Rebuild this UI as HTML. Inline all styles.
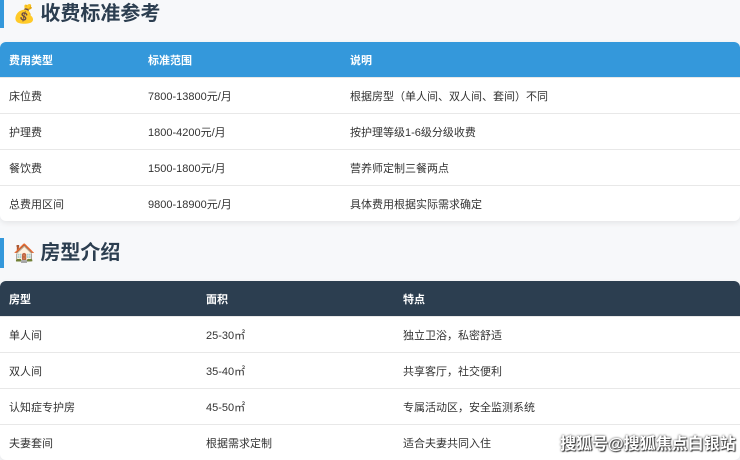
<!DOCTYPE html>
<html><head><meta charset="utf-8"><style>
body{margin:0;width:740px;height:456px;overflow:hidden;background:#f7f8fa;font-family:"Liberation Sans","Noto Sans CJK SC",sans-serif;position:relative}
.h{position:absolute;left:0;height:30px;border-left:4px solid #3498db;font-size:20px;font-weight:bold;color:#2c3e50;line-height:30px;padding-left:9px;display:flex;align-items:center}
.h span.i{font-size:18px;margin-right:5px}
table{position:absolute;left:0;width:740px;border-collapse:collapse;background:#fff;border-radius:6px;overflow:hidden;box-shadow:0 2px 6px rgba(0,0,0,.08)}
th{color:#fff;font-size:11px;font-weight:bold;text-align:left;height:35px;padding:0 0 0 9px}
td{font-size:11px;color:#333;height:35px;padding:0 0 0 9px;border-top:1px solid #e8e8e8}
.t1 th{background:#3498db}
.t2 th{background:#2c3e50}
.wm{position:absolute;left:560px;top:430px;font-size:16px;white-space:nowrap;color:#fff;text-shadow:0 0 2px #333,1px 1px 1px #333;font-weight:bold}
</style></head><body>
<div class="h" style="top:0;height:28px"><span class="i">💰</span>收费标准参考</div>
<table class="t1" style="top:42px">
<tr><th style="width:130px">费用类型</th><th style="width:193px">标准范围</th><th>说明</th></tr>
<tr><td>床位费</td><td>7800-13800元/月</td><td>根据房型（单人间、双人间、套间）不同</td></tr>
<tr><td>护理费</td><td>1800-4200元/月</td><td>按护理等级1-6级分级收费</td></tr>
<tr><td>餐饮费</td><td>1500-1800元/月</td><td>营养师定制三餐两点</td></tr>
<tr><td>总费用区间</td><td>9800-18900元/月</td><td>具体费用根据实际需求确定</td></tr>
</table>
<div class="h" style="top:238px"><span class="i">🏠</span>房型介绍</div>
<table class="t2" style="top:281px">
<tr><th style="width:188px">房型</th><th style="width:188px">面积</th><th>特点</th></tr>
<tr><td>单人间</td><td>25-30㎡</td><td>独立卫浴，私密舒适</td></tr>
<tr><td>双人间</td><td>35-40㎡</td><td>共享客厅，社交便利</td></tr>
<tr><td>认知症专护房</td><td>45-50㎡</td><td>专属活动区，安全监测系统</td></tr>
<tr><td>夫妻套间</td><td>根据需求定制</td><td>适合夫妻共同入住</td></tr>
</table>
<div class="wm">搜狐号@搜狐焦点白银站</div>
</body></html>
